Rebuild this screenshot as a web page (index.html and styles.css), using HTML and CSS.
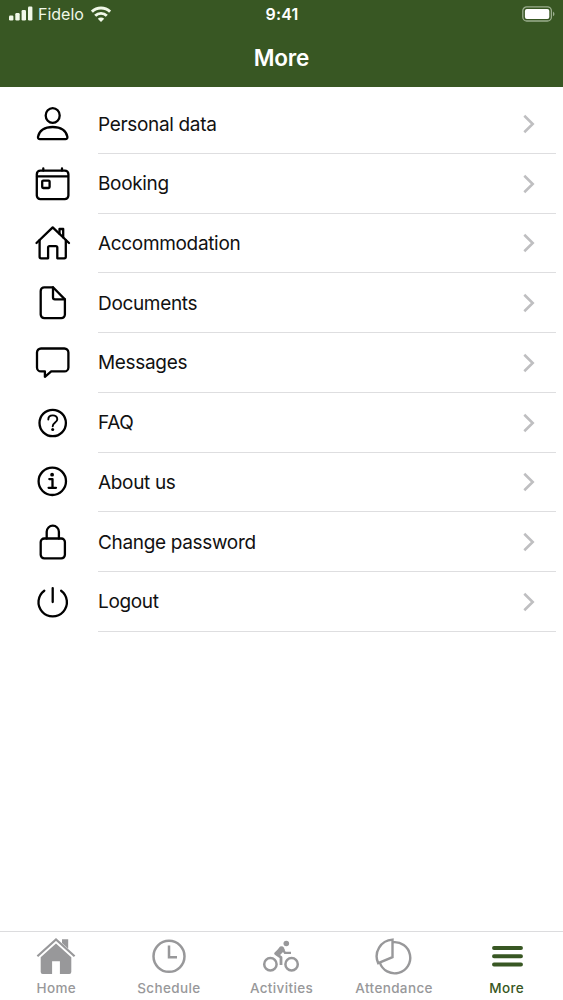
FILE: index.html
```
<!DOCTYPE html>
<html lang="en">
<head>
  <meta charset="UTF-8" />
  <meta name="viewport" content="width=device-width, initial-scale=1.0" />
  <title>More</title>
  <link rel="stylesheet" href="styles.css">
</head>
<body>
  <div class="app">
    <header class="header">
      <div class="status">
        <div class="carrier">
          <svg class="signal" width="24" height="16" viewBox="0 0 24 16" fill="currentColor">
            <rect x="0" y="9.5" width="4.4" height="5" rx="1.2"/>
            <rect x="6.3" y="7" width="4.4" height="7.5" rx="1.2"/>
            <rect x="12.6" y="4" width="4.4" height="10.5" rx="1.2"/>
            <rect x="19" y="0.5" width="4.4" height="14" rx="1.2"/>
          </svg>
          <span>Fidelo</span>
          <svg class="wifi" width="20" height="16" viewBox="0 0 20 16" fill="none" stroke="currentColor" stroke-width="2.9">
            <path d="M.9 5.7a13 13 0 0 1 18.2 0"/>
            <path d="M4.2 9.7a8.3 8.3 0 0 1 11.6 0"/>
            <path d="M10 16l-3.200-3.200a4.500 4.500 0 0 1 6.400 0z" fill="currentColor" stroke="none"/>
          </svg>
        </div>
        <div class="time">9:41</div>
        <div class="battery">
          <svg width="34" height="16" viewBox="0 0 34 16">
            <rect x="1.800" y=".8" width="28.600" height="14.200" rx="4" fill="none" stroke="#9bae8f" stroke-width="1.300"/>
            <rect x="3.900" y="2.900" width="24.400" height="10" rx="2" fill="#fff"/>
            <path d="M32 5.600q3 2.300 0 4.600z" fill="#9bae8f"/>
          </svg>
        </div>
      </div>
      <h1>More</h1>
    </header>

    <main class="menu">
      <a class="item">
        <svg class="icon" viewBox="0 0 40 40">
          <ellipse cx="19.7" cy="11.5" rx="7" ry="7.4"/>
          <path d="M7 35.1h25.400q2.200 0 2-2.200C33.300 26.400 27.500 23 19.700 23S6.100 26.400 5 32.900q-.2 2.200 2 2.200z"/>
        </svg>
        <div class="label">Personal data <svg class="arrow" viewBox="0 0 12 20"><path d="M1.300 1.800 9.700 10l-8.400 8.200"/></svg></div>
      </a>
      <a class="item">
        <svg class="icon" viewBox="0 0 40 40">
          <rect x="3.800" y="6.600" width="31.600" height="28.600" rx="3.600"/>
          <path d="M4 12.300h31M10.300 4.500v2M29 4.500v2"/>
          <rect x="9.200" y="16.600" width="7.400" height="7.400" rx="1"/>
        </svg>
        <div class="label">Booking <svg class="arrow" viewBox="0 0 12 20"><path d="M1.300 1.800 9.700 10l-8.400 8.200"/></svg></div>
      </a>
      <a class="item">
        <svg class="icon" viewBox="0 0 40 40">
          <path d="M3.500 20 19.700 4.400 36 20"/>
          <path d="M6.600 17.200v16.600q0 1.500 1.500 1.500h7V24.600q0-1.500 1.500-1.500h6.200q1.500 0 1.500 1.500v10.700h7q1.500 0 1.500-1.500V17.200M26.500 10.700V6h3.700v8.400"/>
        </svg>
        <div class="label">Accommodation <svg class="arrow" viewBox="0 0 12 20"><path d="M1.300 1.800 9.700 10l-8.400 8.200"/></svg></div>
      </a>
      <a class="item">
        <svg class="icon" viewBox="0 0 40 40">
          <path d="M20 4.300h-8.700a3.600 3.600 0 0 0-3.600 3.600v23.700a3.600 3.600 0 0 0 3.600 3.600h17a3.600 3.600 0 0 0 3.600-3.600V16.400z"/>
          <path d="M20 4.300v10.200q0 1.900 1.900 1.900h10"/>
        </svg>
        <div class="label">Documents <svg class="arrow" viewBox="0 0 12 20"><path d="M1.300 1.800 9.700 10l-8.400 8.200"/></svg></div>
      </a>
      <a class="item">
        <svg class="icon" viewBox="0 0 40 40">
          <path d="M8 5.500h23.400a4 4 0 0 1 4 4v14.900a4 4 0 0 1-4 4H18.200l-6.300 5.400v-5.400H8a4 4 0 0 1-4-4V9.500a4 4 0 0 1 4-4z"/>
        </svg>
        <div class="label">Messages <svg class="arrow" viewBox="0 0 12 20"><path d="M1.300 1.800 9.700 10l-8.400 8.200"/></svg></div>
      </a>
      <a class="item">
        <svg class="icon" viewBox="0 0 40 40">
          <circle cx="19.700" cy="20" r="13.200"/>
          <path d="M15.300 16.500c0-5.400 9-5.400 9-.3 0 3.300-4.600 3.300-4.600 7.100" stroke-width="1.900"/>
          <circle class="dot" cx="19.700" cy="26.600" r="1.500"/>
        </svg>
        <div class="label">FAQ <svg class="arrow" viewBox="0 0 12 20"><path d="M1.300 1.800 9.700 10l-8.400 8.200"/></svg></div>
      </a>
      <a class="item">
        <svg class="icon" viewBox="0 0 40 40">
          <circle cx="19.300" cy="19.300" r="13.700"/>
          <path d="M16.300 17.100h3.200v8.600M15.600 25.800h7.400"/>
          <circle class="dot" cx="19.100" cy="12.700" r="1.900"/>
        </svg>
        <div class="label">About us <svg class="arrow" viewBox="0 0 12 20"><path d="M1.300 1.800 9.700 10l-8.400 8.200"/></svg></div>
      </a>
      <a class="item">
        <svg class="icon" viewBox="0 0 40 40">
          <rect x="7.700" y="16.500" width="24.200" height="19.900" rx="3.600"/>
          <path d="M13.700 16.500V9.800a6.100 6.100 0 0 1 12.200 0v6.700"/>
        </svg>
        <div class="label">Change password <svg class="arrow" viewBox="0 0 12 20"><path d="M1.300 1.800 9.700 10l-8.400 8.200"/></svg></div>
      </a>
      <a class="item">
        <svg class="icon" viewBox="0 0 40 40">
          <path d="M11.300 8.700a14.200 14.200 0 1 0 16.800 0M19.700 6.100v14"/>
        </svg>
        <div class="label">Logout <svg class="arrow" viewBox="0 0 12 20"><path d="M1.300 1.800 9.700 10l-8.400 8.200"/></svg></div>
      </a>
    </main>

    <nav class="tabs">
      <a class="tab">
        <svg viewBox="0 0 40 40" fill="currentColor">
          <path d="M26 3.300h6.200v9.500L26 7z"/>
          <path d="M1.400 20.300 20 3.400l18.600 16.900" fill="none" stroke="currentColor" stroke-width="2.200"/>
          <path d="M20 7.400 35.300 21.200V36q0 2-2 2h-9.400V25.200h-7.800V38H6.700q-2 0-2-2V21.200z"/>
        </svg>
        <span>Home</span>
      </a>
      <a class="tab">
        <svg viewBox="0 0 40 40" fill="none" stroke="currentColor" stroke-width="2.500">
          <circle cx="20" cy="20.300" r="15.500"/>
          <path d="M20 9.500v11.800h8"/>
        </svg>
        <span>Schedule</span>
      </a>
      <a class="tab">
        <svg viewBox="0 0 40 40" fill="none" stroke="currentColor">
          <circle cx="9.400" cy="28.200" r="6.200" stroke-width="2.500"/>
          <circle cx="30.600" cy="28.200" r="6.200" stroke-width="2.500"/>
          <circle cx="25.300" cy="7.500" r="2.800" fill="currentColor" stroke="none"/>
          <path d="M20.800 11.500 14.600 17.600l5.400 3.800v7.600" stroke-width="2.800" stroke-linejoin="round"/>
          <path d="M21 12.300l3 4.600h6" stroke-width="2.400"/>
          <path d="M18.800 10.700q2.500-1.400 4 .8l1.100 2.400-5 5.300-4.300-2z" fill="currentColor" stroke="none"/>
        </svg>
        <span>Activities</span>
      </a>
      <a class="tab">
        <svg viewBox="0 0 40 40" fill="none" stroke="currentColor" stroke-width="2.400">
          <path d="M18.500 3.600v17.500L4.200 27.200A16.700 16.700 0 0 1 18.500 3.600z"/>
          <path d="M18.500 6.300A15.600 15.600 0 1 1 5.800 26.500"/>
        </svg>
        <span>Attendance</span>
      </a>
      <a class="tab active">
        <svg viewBox="0 0 40 40" fill="none" stroke="currentColor" stroke-width="3.900" stroke-linecap="round">
          <path d="M7 12h27M7 20.300h27M7 28.500h27"/>
        </svg>
        <span>More</span>
      </a>
    </nav>
  </div>
</body>
</html>
```
FILE: styles.css
```
body, html {
  margin: 0;
  padding: 0;
  font-family: Inter, "Liberation Sans", sans-serif;
  background-color: #fff;
  color: #111;
}
svg {
  display: block;
  flex-shrink: 0;
}
.app {
  height: 1000px;
  display: flex;
  flex-direction: column;
}
.header {
  height: 87px;
  background-color: #385723;
  color: #fff;
}
.status {
  display: grid;
  grid-template-columns: 1fr auto 1fr;
  align-items: center;
  height: 28px;
  padding: 0 8px 0 9px;
}
.carrier {
  display: flex;
  align-items: center;
  font-size: 16px;
  color: #f0f8e8;
}
.carrier span {
  margin-left: 5px;
}
.signal {
  margin-bottom: 1px;
}
.wifi {
  margin-left: 7px;
  margin-bottom: 1px;
}
.time {
  font-size: 16px;
  font-weight: 600;
  letter-spacing: 0.2px;
}
.battery {
  justify-self: end;
}
h1 {
  margin: 0;
  padding-top: 16px;
  font-size: 22.5px;
  line-height: 28px;
  font-weight: 600;
  letter-spacing: -0.2px;
  text-align: center;
}
.menu {
  flex: 1;
  padding-top: 7.2px;
}
.item {
  display: flex;
  align-items: center;
  height: 59.72px;
  padding: 0 7px 0 33px;
}
.icon {
  width: 40px;
  height: 40px;
  fill: none;
  stroke: #000;
  stroke-width: 2.3;
  stroke-linecap: round;
  stroke-linejoin: round;
}
.icon .dot {
  fill: #000;
  stroke: none;
}
.label {
  flex: 1;
  display: flex;
  align-items: center;
  justify-content: space-between;
  box-sizing: border-box;
  height: 100%;
  margin-left: 25px;
  padding-top: 1px;
  padding-right: 21px;
  border-bottom: 1px solid #dedee0;
  font-size: 19px;
  letter-spacing: -0.33px;
}
.arrow {
  width: 12px;
  height: 20px;
  fill: none;
  stroke: #bfbfc1;
  stroke-width: 2.6;
}
.tabs {
  display: grid;
  grid-template-columns: repeat(5, 1fr);
  height: 68px;
  border-top: 1px solid #dcdcde;
}
.tab {
  display: flex;
  flex-direction: column;
  align-items: center;
  padding-top: 4px;
  color: #98989a;
  font-size: 13.5px;
  font-weight: 500;
  letter-spacing: 0.36px;
}
.tab svg {
  width: 40px;
  height: 40px;
}
.tab span {
  margin-top: 4px;
}
.active {
  color: #385723;
}
```
